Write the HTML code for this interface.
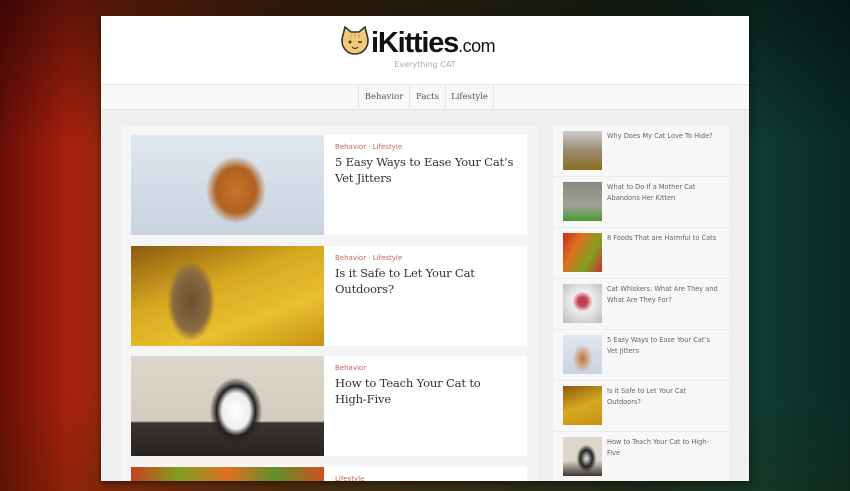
<!DOCTYPE html>
<html><head><meta charset="utf-8"><style>
*{margin:0;padding:0;box-sizing:border-box}
html,body{width:850px;height:491px;overflow:hidden}
body{position:relative;font-family:"Liberation Sans",sans-serif;
background:linear-gradient(90deg,#6a0e08 0%,#a8200e 8%,#8a2a0c 14%,#5a2a10 30%,#3a3018 50%,#1c2a1c 75%,#0e3a30 90%,#082a24 100%);}
.bgshade{position:absolute;left:0;top:0;width:850px;height:491px;background:linear-gradient(180deg,rgba(0,0,0,.45) 0%,rgba(0,0,0,0) 30%,rgba(0,0,0,0) 80%,rgba(40,40,0,.2) 100%)}
.panel{position:absolute;left:101px;top:16px;width:648px;height:465px;background:#efefef;overflow:hidden;box-shadow:0 2px 6px rgba(0,0,0,.5)}
.hdr{height:68px;background:#fff;position:relative}
.logo{position:absolute;left:238px;top:9px;width:172px;height:34px}
.tag{position:absolute;top:44px;left:0;width:100%;text-align:center;font-family:"DejaVu Sans",sans-serif;font-size:8px;color:#aaa}
.nav{height:26px;background:#f8f8f8;border-top:1px solid #e8e8e8;border-bottom:1px solid #e4e4e4;position:relative}
.nav div{position:absolute;top:0;height:25px;line-height:25px;font-family:"DejaVu Serif",serif;font-size:8.5px;color:#555;border-left:1px solid #e4e4e4;text-align:center}
.main{position:absolute;left:21px;top:110px;width:416px;height:355px;background:#f5f5f5}
.card{position:absolute;left:9px;width:396px;height:100px;background:#fff}
.card .img{position:absolute;left:0;top:0;width:193px;height:100px}
.card .cat{position:absolute;left:204px;top:8px;font-family:"DejaVu Sans",sans-serif;font-size:7px;color:#c8625a}
.card .t{position:absolute;left:204px;top:19px;width:190px;font-family:"DejaVu Serif",serif;font-size:11.6px;letter-spacing:-0.2px;line-height:16px;color:#333}
.side{position:absolute;left:452px;top:110px;width:176px;height:355px;background:#f7f7f7}
.si{position:absolute;left:0;width:176px;height:51px;border-bottom:1px solid #ececec}
.si .th{position:absolute;left:10px;top:5px;width:39px;height:39px}
.si .tx{position:absolute;left:54px;top:5px;width:118px;font-family:"DejaVu Sans",sans-serif;font-size:6.6px;line-height:11px;color:#666}
</style></head><body>
<div class="bgshade"></div>
<div class="panel">
 <div class="hdr">
  <svg class="logo" viewBox="0 0 172 34">
   <g transform="translate(2,2)">
    <path d="M2 8 L4 0 L10 5 L18 5 L24 0 L26 8 Q28 14 26 19 Q22 27 14 27 Q6 27 2 19 Q0 14 2 8Z" fill="#f3c879" stroke="#333" stroke-width="1.6"/>
    <path d="M10 7 l0 4 M14 6 l0 4 M18 7 l0 4" stroke="#d9a050" stroke-width="1.2"/>
    <circle cx="9" cy="15" r="1.5" fill="#333"/><path d="M17 15 l4 0" stroke="#333" stroke-width="1.5"/>
    <path d="M11 20 q3 3 6 0" stroke="#333" stroke-width="1.2" fill="none"/>
   </g>
   <text x="32" y="27" font-family="Liberation Sans" font-weight="bold" font-size="29" fill="#111" letter-spacing="-1.2">iKitties<tspan font-weight="normal" font-size="18" letter-spacing="-0.5">.com</tspan></text>
  </svg>
  <div class="tag">Everything CAT</div>
 </div>
 <div class="nav">
  <div style="left:257px;width:51px">Behavior</div>
  <div style="left:308px;width:36px">Facts</div>
  <div style="left:344px;width:49px;border-right:1px solid #e4e4e4">Lifestyle</div>
 </div>
 <div class="main">
  <div class="card" style="top:9px"><div class="img" style="background:radial-gradient(ellipse 40px 45px at 105px 55px,#c8742a,#b06020 50%,rgba(0,0,0,0) 75%),linear-gradient(#dfe6ee,#c9d4e0)"></div><div class="cat">Behavior · Lifestyle</div><div class="t">5 Easy Ways to Ease Your Cat’s Vet Jitters</div></div>
  <div class="card" style="top:120px"><div class="img" style="background:radial-gradient(ellipse 30px 50px at 60px 55px,#6a5030,#8a6a40 60%,rgba(0,0,0,0) 80%),linear-gradient(160deg,#8a5a10,#d8a820 40%,#e8c030 70%,#c89010)"></div><div class="cat">Behavior · Lifestyle</div><div class="t" style="width:160px">Is it Safe to Let Your Cat Outdoors?</div></div>
  <div class="card" style="top:230px"><div class="img" style="background:radial-gradient(ellipse 35px 45px at 105px 55px,#fff,#eee 40%,#222 55%,rgba(0,0,0,0) 75%),linear-gradient(180deg,#ddd6cc 0%,#d4ccc0 65%,#3a3430 67%,#2a2420 100%)"></div><div class="cat">Behavior</div><div class="t" style="width:165px">How to Teach Your Cat to High-Five</div></div>
  <div class="card" style="top:341px"><div class="img" style="background:linear-gradient(90deg,#c84020,#80a020,#e07020,#60902a,#d05020)"></div><div class="cat">Lifestyle</div></div>
 </div>
 <div class="side">
  <div class="si" style="top:0"><div class="th" style="background:linear-gradient(#ccc,#9a8a70 50%,#8a7020)"></div><div class="tx">Why Does My Cat Love To Hide?</div></div>
  <div class="si" style="top:51px"><div class="th" style="background:linear-gradient(#8a8a80,#a0a098 60%,#4a9a30)"></div><div class="tx">What to Do If a Mother Cat Abandons Her Kitten</div></div>
  <div class="si" style="top:102px"><div class="th" style="background:linear-gradient(120deg,#c03020,#e07020,#80a020,#d03030)"></div><div class="tx">8 Foods That are Harmful to Cats</div></div>
  <div class="si" style="top:153px"><div class="th" style="background:radial-gradient(circle at 50% 45%,#c04050 15%,#eee 35%,#bbb)"></div><div class="tx">Cat Whiskers: What Are They and What Are They For?</div></div>
  <div class="si" style="top:204px"><div class="th" style="background:radial-gradient(ellipse 10px 14px at 50% 60%,#c87030,rgba(0,0,0,0)),linear-gradient(#dfe6ee,#c9d4e0)"></div><div class="tx" style="width:108px">5 Easy Ways to Ease Your Cat’s Vet Jitters</div></div>
  <div class="si" style="top:255px"><div class="th" style="background:linear-gradient(160deg,#8a5a10,#d8a820 50%,#c89010)"></div><div class="tx" style="width:95px">Is it Safe to Let Your Cat Outdoors?</div></div>
  <div class="si" style="top:306px"><div class="th" style="background:radial-gradient(ellipse 10px 14px at 60% 55%,#eee,#222 60%,rgba(0,0,0,0)),linear-gradient(#ddd6cc 60%,#3a3430)"></div><div class="tx" style="width:110px">How to Teach Your Cat to High-Five</div></div>
 </div>
</div>
</body></html>
